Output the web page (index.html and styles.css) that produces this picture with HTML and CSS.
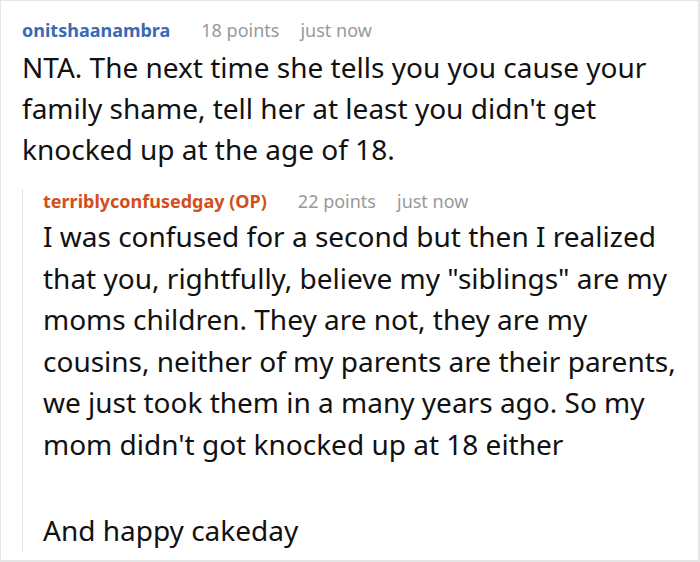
FILE: index.html
```html
<!DOCTYPE html>
<html>
<head>
<meta charset="utf-8">
<link rel="stylesheet" href="styles.css">
</head>
<body>
<div class="frame">
  <div class="comment">
    <div class="meta">
      <span class="user">onitshaanambra</span>
      <span class="info">18 points</span>
      <span class="info">just now</span>
    </div>
    <div class="body">NTA. The next time she tells you you cause your family shame, tell her at least you didn't get knocked up at the age of 18.</div>
    <div class="reply">
      <div class="meta">
        <span class="user op">terriblyconfusedgay (OP)</span>
        <span class="info">22 points</span>
        <span class="info">just now</span>
      </div>
      <div class="body reply-body">
        <p>I was confused for a second but then I realized that you, rightfully, believe my "siblings" are my moms children. They are not, they are my cousins, neither of my parents are their parents, we just took them in a many years ago. So my mom didn't got knocked up at 18 either</p>
        <p>And happy cakeday</p>
      </div>
    </div>
  </div>
</div>
</body>
</html>
```
FILE: styles.css
```css
html, body {
  margin: 0;
  padding: 0;
  background: #fff;
}
.frame {
  box-sizing: border-box;
  width: 700px;
  height: 562px;
  border: 1px solid #e6e6e6;
  border-right-width: 2px;
  border-bottom-width: 2px;
  overflow: hidden;
  font-family: "Noto Sans", "Open Sans", sans-serif;
  color: #111;
  padding: 17px 0 0 21px;
}
.meta {
  display: flex;
  font-size: 18px;
  line-height: 24px;
  white-space: nowrap;
}
.user {
  font-weight: bold;
  color: #3a6ab5;
  margin-right: 31px;
}
.user.op {
  color: #d24e1a;
}
.info {
  color: #999;
  margin-right: 21px;
}
.body {
  font-size: 28px;
  line-height: 41px;
  margin-top: 5px;
  padding-right: 20px;
}
.reply-body {
  line-height: 41.6px;
  margin-top: 3px;
  margin-bottom: -11px;
  display: flex;
  flex-direction: column;
  gap: 44.5px;
}
.reply-body p {
  margin: 0;
}
.reply {
  margin-top: 19px;
  border-left: 1px solid #e0e0e0;
  padding-left: 20px;
}
```
